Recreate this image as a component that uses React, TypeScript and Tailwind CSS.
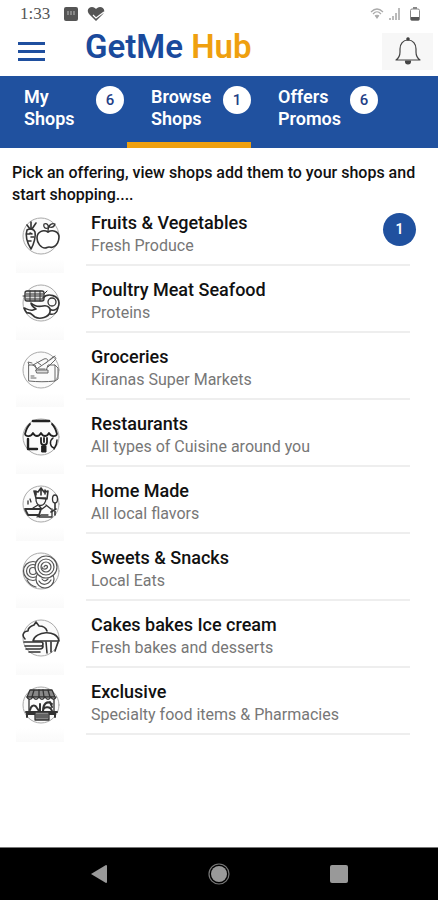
import type { ReactNode } from "react";

const tabs = [
  { top: "My", bottom: "Shops", count: 6, active: false },
  { top: "Browse", bottom: "Shops", count: 1, active: true },
  { top: "Offers", bottom: "Promos", count: 6, active: false },
];

function RoundIcon({ children }: { children: ReactNode }) {
  return (
    <svg
      viewBox="0 0 38 38"
      className="h-[38px] w-[38px]"
      fill="none"
      stroke="#333"
      strokeWidth="1.3"
      strokeLinecap="round"
      strokeLinejoin="round"
      aria-hidden="true"
    >
      <circle cx="19" cy="19" r="18" fill="#fbfbfb" stroke="#aaa" strokeWidth="1" />
      {children}
    </svg>
  );
}

const produce = (
  <RoundIcon>
    <path d="M5 13c3-2 7-1 8 2 1 4-1 12-4 17-4-6-6-14-4-19z" strokeWidth="1.6" />
    <path d="M8 12 5 8m4 4V5m1 7 4-6M5 17h3m4 3H9m-3 4h3m-1-8 2 1" strokeWidth="1.6" />
    <path d="M26 15c-5-3-11 0-11 6 0 5 4 10 8 10 2 0 2-1 4-1s2 1 4 0c4-1 6-6 6-10 0-5-6-8-11-5z" fill="#fff" strokeWidth="1.6" />
    <path d="M26 15c0-3 0-5 2-7m-2 3c-3 1-5-1-4-4 3-1 5 1 4 4zm1-1c1-3 3-4 6-3-1 3-3 4-6 3z" />
  </RoundIcon>
);

const meat = (
  <RoundIcon>
    <path d="M5 7h15q2 0 2 2v6q0 2-2 2H5q-2 0-2-2V9q0-2 2-2z" fill="#ddd" />
    <path d="M4 10h17M4 12h17M4 15h17M8 7v10m5-10v10m5-10v10M1 12h2m19-2 3-3" strokeWidth="1" />
    <path d="M21 14c5-6 16-2 16 5 0 6-5 9-10 6" strokeWidth="1.6" />
    <circle cx="30" cy="18" r="4" />
    <path d="M14 25c-3-2-5-4-5-6 3 3 7 4 12 3 5-1 8 2 7 6-1 5-10 8-15 5-3-2-4-5-8-4-2-2-2-2-3-5 3 1 6 3 9 2z" fill="#fff" strokeWidth="1.6" />
    <path d="M28 30c4 1 7-1 8-6" />
  </RoundIcon>
);

const groceries = (
  <RoundIcon>
    <g stroke="#666" strokeWidth="1">
      <path d="M7 14h6l2 6h9l2-6h7v16c-9 1-17 1-26 0zM7 14l-1-3 4 1M33 14l3 3v11l-3 2" />
      <path d="m11 14 11-6c3-1 5 1 3 3l-9 6m8-5 7-6c2-1 4 1 2 3l-7 7M11 14l5 4h7m-8-7 4 3m9-5 5-4M9 25h3m-3 2h5" />
      <path d="M14 19h12v3H15z" fill="#ddd" />
    </g>
  </RoundIcon>
);

const restaurant = (
  <RoundIcon>
    <g stroke="#222" strokeWidth="1.8">
      <path d="M11 3h16" strokeWidth="2.6" />
      <path d="M8 6C5 9 4 12 3 16M30 6c3 3 4 6 5 10M3 16c1 3 6 3 8-1 2 4 6 4 8 0 2 4 6 4 8 0 2 4 7 4 8 1" />
      <path d="M6 21v10h9" strokeWidth="2.4" />
      <path d="M19 20v4c0 4 6 4 6 0v-4m-3 0v4" />
      <path d="M20 28h4v6h-4z" fill="#222" strokeWidth="1" />
      <path d="M31 20c-4 3-3 9 1 10m3-8c0 3-1 6-3 9" strokeWidth="1.5" />
    </g>
  </RoundIcon>
);

const homeMade = (
  <RoundIcon>
    <path d="m14 13-2-7 4 1 3-4 3 4 4-1-1 8zM14 6v4m5-5v5m4-5v4" strokeWidth="1.6" />
    <path d="M14 13c-1 10 10 10 10 0zM16 20l-5 3m13-3 5 4M17 21l3 3 4-3M8 14l1 3m-3-1v3" />
    <path d="M3 24h16l-2 6H6zM3 24h16" strokeWidth="1.8" />
    <path d="M17 32h13v-8M15 32l4-2h7" />
    <ellipse cx="33" cy="14" rx="2.500" ry="4" />
    <path d="M33 18v12m-4-3 5-3" strokeWidth="1.6" />
  </RoundIcon>
);

const sweets = (
  <RoundIcon>
    <g stroke="#555" strokeWidth="1.2">
      <circle cx="11" cy="19" r="9.5" />
      <circle cx="11" cy="19" r="6.5" />
      <circle cx="11" cy="19" r="3.5" />
      <circle cx="23" cy="27" r="9" fill="#fff" />
      <path d="M17 29c3 5 9 4 12-1m-9-1c2 3 4 2 6 0M5 28c2 4 5 6 9 7" />
      <circle cx="24" cy="15" r="11" fill="#fff" />
      <circle cx="24" cy="15" r="8" />
      <circle cx="24" cy="15" r="5" />
      <path d="M22 15c1-3 5-1 3 1s-5 1-5-1" />
    </g>
  </RoundIcon>
);

const cakes = (
  <RoundIcon>
    <g strokeWidth="1.6">
      <path d="M3 20c-4-4-1-8 3-8 0-3 3-5 6-6l2-3 3 4c4 0 7 2 8 5" />
      <path d="M11 22c2-10 24-12 26 0z" fill="#fff" />
      <path d="M2 23h17q2 0 2 2t-2 2H3M4 30h14q3 0 3-3M7 33h11M24 23l1 11m11-11-3 9m-4-9v10" />
    </g>
  </RoundIcon>
);

const exclusive = (
  <RoundIcon>
    <path d="M8 4h22l3 7H5z" fill="#888" />
    <path d="M5 11c1 3 4 3 6 0 2 3 4 3 6 0 2 3 4 3 6 0 2 3 4 3 6 0 1 3 4 3 5 0M12 4l-2 7m7-7v7m4-7 1 7m4-7 2 7M7 13v15m25-15v15" />
    <path d="M8 24c1-5 5-6 7-2l2 3m4 0c0-7 4-11 9-7m-9 7c0-4 7-6 9 0m-12 0v-7m10-2 2 5" strokeWidth="2" />
    <path d="M4 26h31M6 28h7m12 0h8M5 27v4m28-4v4" strokeWidth="2" />
    <path d="M13 26h14v8H13z" fill="#888" />
    <path d="M14 29h12m-12 2h12" stroke="#555" />
  </RoundIcon>
);

const offerings = [
  { title: "Fruits & Vegetables", note: "Fresh Produce", icon: produce, count: 1 },
  { title: "Poultry Meat Seafood", note: "Proteins", icon: meat },
  { title: "Groceries", note: "Kiranas Super Markets", icon: groceries },
  { title: "Restaurants", note: "All types of Cuisine around you", icon: restaurant },
  { title: "Home Made", note: "All local flavors", icon: homeMade },
  { title: "Sweets & Snacks", note: "Local Eats", icon: sweets },
  { title: "Cakes bakes Ice cream", note: "Fresh bakes and desserts", icon: cakes },
  { title: "Exclusive", note: "Specialty food items & Pharmacies", icon: exclusive },
];

function StatusBar() {
  return (
    <div className="flex h-7 items-center pr-[18px] pl-5">
      <span className="font-['Liberation_Serif',serif] text-[17px] leading-7 text-[#555]">1:33</span>
      <svg viewBox="0 0 14 14" className="ml-[14px] h-[14px] w-[14px]" aria-hidden="true">
        <rect width="14" height="14" rx="2" fill="#555" />
        <path d="M3 5h8M3 7h8" stroke="#bbb" strokeWidth="1" strokeDasharray="2 1" />
      </svg>
      <svg viewBox="0 0 18 16" className="ml-[9px] h-4 w-[18px]" aria-hidden="true">
        <path d="M9 15 2 8C-1 4 2 1 5 1c2 0 3 1 4 2 1-1 2-2 4-2 3 0 6 3 3 7z" fill="#555" />
        <path d="m6 9 3 3 8-6" fill="none" stroke="#fff" strokeWidth="1.2" />
      </svg>
      <div className="ml-auto flex items-center">
        <svg viewBox="0 0 14 12" className="h-3 w-[14px]" fill="none" stroke="#aaa" strokeWidth="1.2" aria-hidden="true">
          <path d="M1 4c4-4 8-4 12 0M3 6c3-3 5-3 8 0M5 8c1-1 3-1 4 0" />
          <path d="m5 8 2 3 2-3z" fill="#aaa" stroke="none" />
        </svg>
        <svg viewBox="0 0 12 12" className="ml-[5px] h-3 w-3" fill="#bbb" aria-hidden="true">
          <path d="M0 10h2v2H0zM3 8h2v4H3zM6 5h2v7H6zM9 0h2v12H9z" />
        </svg>
        <svg viewBox="0 0 10 14" className="ml-[9px] h-[14px] w-[10px]" fill="none" stroke="#888" aria-hidden="true">
          <rect x="0.5" y="2" width="9" height="11.5" rx="1.5" />
          <path d="M3 1h4" strokeWidth="2" />
          <path d="M1 11.500h8" stroke="#555" strokeWidth="3" />
        </svg>
      </div>
    </div>
  );
}

export default function App() {
  return (
    <div className="flex min-h-screen flex-col bg-white font-['Roboto',sans-serif]">
      <StatusBar />
      <header className="flex h-12 items-center pr-[5px] pb-[2px] pl-[18px]">
        <button type="button" aria-label="Open menu" className="flex w-[27px] flex-col gap-[5px]">
          <span className="h-[3px] w-full bg-[#1f4f9f]" />
          <span className="h-[3px] w-full bg-[#1f4f9f]" />
          <span className="h-[3px] w-full bg-[#1f4f9f]" />
        </button>
        <h1 className="ml-10 pb-2 text-[33px] leading-[38px] font-semibold text-[#1a4a9c]">
          GetMe <span className="text-[#efa00f]">Hub</span>
        </h1>
        <button type="button" aria-label="Notifications" className="ml-auto flex h-[37px] w-[51px] items-center justify-center bg-[#f7f7f7]">
          <svg viewBox="0 0 26 28" className="h-7 w-[26px]" fill="none" stroke="#444" strokeWidth="1.2" strokeLinejoin="round" aria-hidden="true">
            <path d="M1 23c3-2 4-4 4-8v-3c0-5 3-9 8-9s8 4 8 9v3c0 4 1 6 4 8z" />
            <circle cx="13" cy="2" r="1.200" fill="#333" />
            <path d="M10.500 24h5c0 4-5 4-5 0z" fill="#444" />
          </svg>
        </button>
      </header>
      <nav className="flex h-[72px] gap-[3px] bg-[#20519f]" aria-label="Sections">
        {tabs.map((tab) => (
          <button
            type="button"
            key={tab.top}
            className={`flex w-[124px] items-start justify-between border-b-[6px] pt-[10px] text-left ${
              tab.active ? "border-[#efa00f]" : "border-transparent"
            }`}
          >
            <span className="pl-6 text-[18px] leading-[22px] font-semibold text-white">
              {tab.top}
              <br />
              {tab.bottom}
            </span>
            <span className="flex h-7 w-7 shrink-0 items-center justify-center rounded-full bg-white text-[15px] font-medium text-[#1f3f86]">
              {tab.count}
            </span>
          </button>
        ))}
      </nav>
      <main className="flex-1">
        <p className="px-3 pt-[14px] text-[16px] leading-[22px] font-medium text-[#111]">
          Pick an offering, view shops add them to your shops and start shopping....
        </p>
        <ul className="pt-[5px] pr-7 pl-4">
          {offerings.map((item) => (
            <li key={item.title} className="relative flex h-[67px] items-start">
              <div className="flex w-[70px] shrink-0 flex-col gap-[4px] pt-[6px]">
                <div className="pl-[6px]">{item.icon}</div>
                <div className="h-[14px] w-12 bg-linear-to-b from-white to-[#fafafa]" />
              </div>
              <a href="#" className="block h-[55px] flex-1 border-b-2 border-[#eee] pl-[5px]">
                <span className="block text-[18px] leading-6 font-medium text-[#111]">{item.title}</span>
                <span className="block text-[16px] leading-[22px] text-[#777]">{item.note}</span>
              </a>
              {item.count && (
                <span className="absolute top-[2px] -right-[6px] flex h-[33px] w-[33px] items-center justify-center rounded-full bg-[#20519f] text-[14px] font-semibold text-white">
                  {item.count}
                </span>
              )}
            </li>
          ))}
        </ul>
      </main>
      <footer className="grid h-[53px] grid-cols-3 items-center border-t border-[#777] bg-black px-[39px]">
        <button type="button" aria-label="Back" className="flex justify-center">
          <svg viewBox="0 0 18 18" className="h-[18px] w-[18px]" fill="#999" aria-hidden="true">
            <path d="M1 9 16 0q1 0 1 1v16q0 1-1 1z" />
          </svg>
        </button>
        <button type="button" aria-label="Home" className="flex justify-center">
          <svg viewBox="0 0 22 22" className="h-[22px] w-[22px]" aria-hidden="true">
            <circle cx="11" cy="11" r="10" fill="none" stroke="#777" strokeWidth="1.2" />
            <circle cx="11" cy="11" r="8" fill="#999" />
          </svg>
        </button>
        <button type="button" aria-label="Recent apps" className="flex justify-center">
          <span className="h-[18px] w-[18px] rounded-[2px] bg-[#999]" />
        </button>
      </footer>
    </div>
  );
}
